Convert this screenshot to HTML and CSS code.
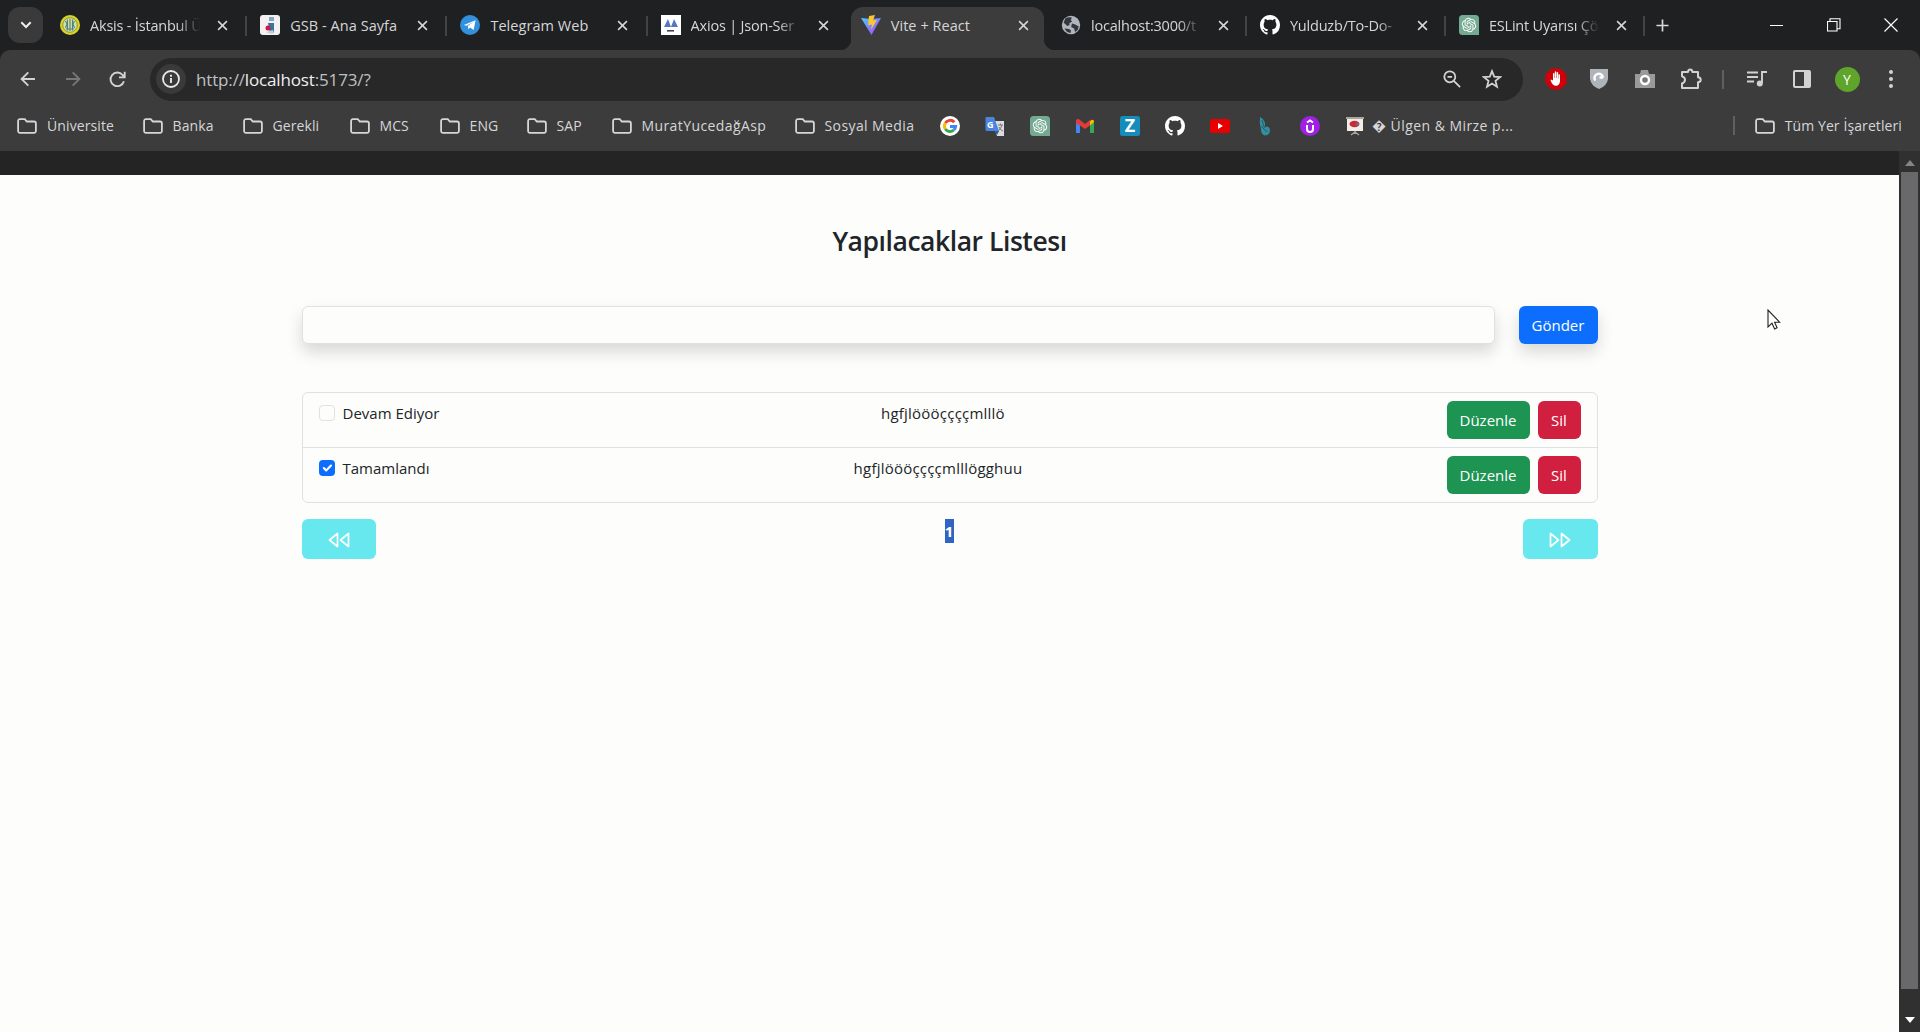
FILE: index.html
```html
<!DOCTYPE html>
<html lang="tr">
<head>
<meta charset="utf-8">
<title>Vite + React</title>
<link rel="stylesheet" href="styles.css">
</head>
<body>
<svg class="defs" aria-hidden="true">
  <symbol id="x" viewBox="0 0 12 12"><path d="M1.2 1.2l9.6 9.6M10.8 1.2l-9.6 9.6" stroke="currentColor" stroke-width="1.7" fill="none"/></symbol>
  <symbol id="folder" viewBox="0 0 20 16"><path d="M3 1.2h4.8l2 2.3H17A1.9 1.9 0 0 1 18.9 5.4v7.7A1.8 1.8 0 0 1 17 14.9H3a1.8 1.8 0 0 1-1.9-1.8V3A1.8 1.8 0 0 1 3 1.2z" stroke="currentColor" stroke-width="1.8" fill="none"/></symbol>
  <symbol id="github" viewBox="0 0 16 16"><path fill="#fff" d="M8 0C3.58 0 0 3.58 0 8c0 3.54 2.29 6.53 5.47 7.59.4.07.55-.17.55-.38 0-.19-.01-.82-.01-1.49-2.01.37-2.53-.49-2.69-.94-.09-.23-.48-.94-.82-1.13-.28-.15-.68-.52-.01-.53.63-.01 1.08.58 1.23.82.72 1.21 1.87.87 2.33.66.07-.52.28-.87.51-1.07-1.78-.2-3.64-.89-3.64-3.95 0-.87.31-1.59.82-2.15-.08-.2-.36-1.02.08-2.12 0 0 .67-.21 2.2.82.64-.18 1.32-.27 2-.27s1.36.09 2 .27c1.53-1.04 2.2-.82 2.2-.82.44 1.1.16 1.92.08 2.12.51.56.82 1.27.82 2.15 0 3.07-1.87 3.75-3.65 3.95.29.25.54.73.54 1.48 0 1.07-.01 1.93-.01 2.2 0 .21.15.46.55.38A8.01 8.01 0 0 0 16 8c0-4.42-3.58-8-8-8z"/></symbol>
  <symbol id="gpt" viewBox="0 0 40 40"><path d="M7 0h26a7 7 0 0 1 7 7v33H7a7 7 0 0 1-7-7V7a7 7 0 0 1 7-7z" fill="#74aa92"/><path transform="translate(5.6 5.6) scale(1.2)" fill="#fff" d="M22.2819 9.8211a5.9847 5.9847 0 0 0-.5157-4.9108 6.0462 6.0462 0 0 0-6.5098-2.9A6.0651 6.0651 0 0 0 4.9807 4.1818a5.9847 5.9847 0 0 0-3.9977 2.9 6.0462 6.0462 0 0 0 .7427 7.0966 5.98 5.98 0 0 0 .511 4.9107 6.051 6.051 0 0 0 6.5146 2.9001A5.9847 5.9847 0 0 0 13.2599 24a6.0557 6.0557 0 0 0 5.7718-4.2058 5.9894 5.9894 0 0 0 3.9977-2.9001 6.0557 6.0557 0 0 0-.7475-7.0729zm-9.022 12.6081a4.4755 4.4755 0 0 1-2.8764-1.0408l.1419-.0804 4.7783-2.7582a.7948.7948 0 0 0 .3927-.6813v-6.7369l2.02 1.1686a.071.071 0 0 1 .038.052v5.5826a4.504 4.504 0 0 1-4.4945 4.4944zm-9.6607-4.1254a4.4708 4.4708 0 0 1-.5346-3.0137l.142.0852 4.783 2.7582a.7712.7712 0 0 0 .7806 0l5.8428-3.3685v2.3324a.0804.0804 0 0 1-.0332.0615L9.74 19.9502a4.4992 4.4992 0 0 1-6.1408-1.6464zM2.3408 7.8956a4.485 4.485 0 0 1 2.3655-1.9728V11.6a.7664.7664 0 0 0 .3879.6765l5.8144 3.3543-2.0201 1.1685a.0757.0757 0 0 1-.071 0l-4.8303-2.7865A4.504 4.504 0 0 1 2.3408 7.872zm16.5963 3.8558L13.1038 8.364 15.1192 7.2a.0757.0757 0 0 1 .071 0l4.8303 2.7913a4.4944 4.4944 0 0 1-.6765 8.1042v-5.6772a.79.79 0 0 0-.407-.667zm2.0107-3.0231l-.142-.0852-4.7735-2.7818a.7759.7759 0 0 0-.7854 0L9.409 9.2297V6.8974a.0662.0662 0 0 1 .0284-.0615l4.8303-2.7866a4.4992 4.4992 0 0 1 6.6802 4.66zM8.3065 12.863l-2.02-1.1638a.0804.0804 0 0 1-.038-.0567V6.0742a4.4992 4.4992 0 0 1 7.3757-3.4537l-.142.0805L8.704 5.459a.7948.7948 0 0 0-.3927.6813zm1.0976-2.3654l2.602-1.4998 2.6069 1.4998v2.9994l-2.5974 1.4997-2.6067-1.4997Z"/></symbol>
</svg>

<header class="chrome">
  <div class="tabstrip">
    <button class="tabsearch"><svg width="12" height="8" viewBox="0 0 12 8"><path d="M1.3 1.3L6 6l4.700-4.700" stroke="#eee" stroke-width="2" fill="none"/></svg></button>
    <div class="tabs">
      <div class="tab">
        <svg class="fav" viewBox="0 0 20 20"><circle cx="10" cy="10" r="10" fill="#d8d42c"/><circle cx="10" cy="10" r="7.300" fill="#d7e0a8" stroke="#8f9a2a"/><path d="M10 4v12M7.500 4.500v11M12.500 4.500v11M5.500 6l1.500 3-1.500 4M14.500 6L13 9l1.500 4M6 14h8" stroke="#4b8580" stroke-width="1.100" fill="none"/></svg>
        <span class="name fade">Aksis - İstanbul Ü</span><svg class="close"><use href="#x"/></svg><i class="sep"></i>
      </div>
      <div class="tab">
        <svg class="fav" viewBox="0 0 20 20"><rect width="20" height="20" rx="3" fill="#f4f1f3"/><rect x="9" y="2" width="5" height="4" fill="#8ca6b8"/><path d="M8 8h6v10h-4z" fill="#37779d"/><path d="M6 17q5 3 8 1l-1-3z" fill="#c7ccd8"/><circle cx="8" cy="13" r="2.500" fill="#d51245"/></svg>
        <span class="name">GSB - Ana Sayfa</span><svg class="close"><use href="#x"/></svg><i class="sep"></i>
      </div>
      <div class="tab">
        <svg class="fav" viewBox="0 0 20 20"><circle cx="10" cy="10" r="10" fill="#3390dc"/><path d="M3.800 9.900L15.600 5.300 13.600 15l-3.500-2.500-1.700 1.700-.6-3.300 5.500-4-6.800 3.900z" fill="#fff"/></svg>
        <span class="name">Telegram Web</span><svg class="close"><use href="#x"/></svg><i class="sep"></i>
      </div>
      <div class="tab">
        <svg class="fav" viewBox="0 0 20 20"><rect width="20" height="20" fill="#fff"/><path d="M3 12l4-8 3 8zM10 12l3-8 4 8z" fill="#5974c4"/><path d="M6 15.800h7" stroke="#33384c" stroke-width="1.500"/></svg>
        <span class="name fade">Axios | Json-Ser</span><svg class="close"><use href="#x"/></svg>
      </div>
      <div class="tab active">
        <svg class="fav" viewBox="0 0 20 20"><defs><linearGradient id="v" x1="0" y1="0" x2="1" y2="1"><stop offset="0" stop-color="#41d1ff"/><stop offset="1" stop-color="#bd34fe"/></linearGradient></defs><path d="M0 3l10 1 10-1-9.500 17z" fill="url(#v)"/><path d="M8 1l6-1-2 5.500 4-.7L10 15l1-5.500-4 .8z" fill="#ffc62d"/></svg>
        <span class="name">Vite + React</span><svg class="close"><use href="#x"/></svg>
      </div>
      <div class="tab">
        <svg class="fav" viewBox="0 0 20 20"><circle cx="10" cy="10" r="9.200" fill="#adb6be"/><path d="M4.500 3.200Q7 1.800 11 2.400L9.700 5l1.500 1.400-2.700 1.500v2l-2.200 1L2.600 7.500zM11 8.500l3.200 1 3.500 2-1 3.500-2.600 2-1-3.500-3-1.500zM8 14l2 1.500-.5 2.500q-4-.3-6-4.500z" fill="#34363b"/></svg>
        <span class="name fade">localhost:3000/t</span><svg class="close"><use href="#x"/></svg><i class="sep"></i>
      </div>
      <div class="tab">
        <svg class="fav"><use href="#github"/></svg>
        <span class="name fade">Yulduzb/To-Do-</span><svg class="close"><use href="#x"/></svg><i class="sep"></i>
      </div>
      <div class="tab">
        <svg class="fav"><use href="#gpt"/></svg>
        <span class="name fade">ESLint Uyarısı Çö</span><svg class="close"><use href="#x"/></svg><i class="sep"></i>
      </div>
    </div>
    <svg class="newtab" viewBox="0 0 14 14"><path d="M7 .5v13M.5 7h13" stroke="#d8d8dc" stroke-width="1.800"/></svg>
    <div class="winctl">
      <svg width="14" height="14"><path d="M0 7.500h13" stroke="#fff"/></svg>
      <svg width="14" height="14"><path d="M.5 3.500h9.500v9.500H.5zM3 3.500V.7h10v10h-3" stroke="#fff" stroke-width="1.100" fill="none"/></svg>
      <svg width="14" height="14"><path d="M.5 .5l13 13M13.500 .5l-13 13" stroke="#fff" stroke-width="1.200"/></svg>
    </div>
  </div>

  <div class="toolbar">
    <div class="nav">
      <svg width="16" height="16" viewBox="0 0 16 16"><path d="M15 8H2M8.300 1.300L1.600 8l6.700 6.700" stroke="#d2d2d6" stroke-width="1.900" fill="none"/></svg>
      <svg width="16" height="16" viewBox="0 0 16 16"><path d="M1 8h13M7.700 1.300L14.400 8l-6.700 6.700" stroke="#77777b" stroke-width="1.900" fill="none"/></svg>
      <svg width="17" height="17" viewBox="0 0 17 17"><path d="M14.900 10.200A6.800 6.800 0 1 1 13.600 4L15.500 6M15.700 .8v5.600H10" stroke="#d2d2d6" stroke-width="1.900" fill="none"/></svg>
    </div>
    <div class="omnibox">
      <span class="info"><svg width="18" height="18" viewBox="0 0 18 18"><circle cx="9" cy="9" r="8" stroke="#e8e8ea" stroke-width="1.800" fill="none"/><path d="M9 8v5M9 4.800v1.900" stroke="#e8e8ea" stroke-width="1.900"/></svg></span>
      <span class="url">http://<b>localhost</b>:5173/?</span>
      <svg class="zoom" width="18" height="18" viewBox="0 0 18 18"><circle cx="6.800" cy="6.800" r="5.500" stroke="#d2d2d0" stroke-width="1.800" fill="none"/><path d="M4.500 6.800h4.600M10.800 10.800l6.300 6.300" stroke="#d2d2d0" stroke-width="1.800"/></svg>
      <svg width="20" height="20" viewBox="0 0 20 20"><path d="M10 2.200l2.200 5.500 5.900.4-4.600 3.800 1.500 5.800-5-3.200-5 3.200 1.500-5.800-4.600-3.800 5.900-.4z" stroke="#d2d2d0" stroke-width="1.800" fill="none"/></svg>
    </div>
    <div class="ext">
      <svg width="22" height="22" viewBox="0 0 22 22"><path d="M6.500 .5h9l6 6v9l-6 6h-9l-6-6v-9z" fill="#cf0008"/><path d="M6 11.500l2 1V5.500q.8-1.200 1.400 0V10h.4V3.800q.8-1.200 1.500 0V10h.4V4.500q.8-1.100 1.500 0v6h.3V6.800q.9-1 1.500 0v6.700q-.5 4-4 4.300-3.500 0-5.500-5.500z" fill="#fff"/></svg>
      <svg width="18" height="20" viewBox="0 0 18 20"><path d="M0 0h18v10q-1 7-9 10-8-3-9-10z" fill="#aeb4ba"/><path d="M5.300 11.600A4.300 4.300 0 1 1 13 8.500M13.200 8.500h-3.700" stroke="#fff" stroke-width="2.400" fill="none"/></svg>
      <svg width="20" height="18" viewBox="0 0 20 18"><path d="M0 4h5l1-4h7l1 4h6v14H0z" fill="#9a9a9c"/><circle cx="10" cy="10" r="4" stroke="#fff" stroke-width="2.400" fill="#777"/></svg>
      <svg width="22" height="22" viewBox="0 0 22 22"><path d="M2 4h6q0-2.600 2.200-2.600T12.400 4H18v5.200q2.700.2 2.700 2.600T18 14.300V20H2v-4.500q3-1 3-3.700T2 8.200z" stroke="#d2d2d2" stroke-width="2" stroke-linejoin="round" fill="none"/></svg>
      <i class="bar"></i>
      <svg width="20" height="18" viewBox="0 0 20 18"><path d="M0 2.500h11M0 7h11M0 11.500h7M15 13V2h5" stroke="#d2d2d2" stroke-width="1.900" fill="none"/><circle cx="12.800" cy="13.500" r="3" fill="#d2d2d2"/></svg>
      <svg width="18" height="18" viewBox="0 0 18 18"><rect x="1" y="1" width="16" height="16" rx="1" stroke="#d2d2d2" stroke-width="2" fill="none"/><path d="M11 1h6v16h-6z" fill="#d2d2d2"/></svg>
      <span class="avatar">Y</span>
      <svg width="4" height="18" viewBox="0 0 4 18"><circle cx="2" cy="2" r="2" fill="#d2d2d2"/><circle cx="2" cy="9" r="2" fill="#d2d2d2"/><circle cx="2" cy="16" r="2" fill="#d2d2d2"/></svg>
    </div>
  </div>

  <nav class="bookmarks">
    <a class="w1"><svg class="fld"><use href="#folder"/></svg>Üniversite</a>
    <a class="w2"><svg class="fld"><use href="#folder"/></svg>Banka</a>
    <a class="w3"><svg class="fld"><use href="#folder"/></svg>Gerekli</a>
    <a class="w4"><svg class="fld"><use href="#folder"/></svg>MCS</a>
    <a class="w5"><svg class="fld"><use href="#folder"/></svg>ENG</a>
    <a class="w6"><svg class="fld"><use href="#folder"/></svg>SAP</a>
    <a class="w7"><svg class="fld"><use href="#folder"/></svg>MuratYucedağAsp</a>
    <a class="w8"><svg class="fld"><use href="#folder"/></svg>Sosyal Media</a>
    <span class="sites">
      <svg viewBox="0 0 20 20"><circle cx="10" cy="10" r="10" fill="#fff"/><g fill="none" stroke-width="3"><path d="M14.300 6.300A5.600 5.600 0 0 0 5.300 7" stroke="#ea4335"/><path d="M5.300 7a5.600 5.600 0 0 0 0 6" stroke="#fbbc05"/><path d="M5.300 13a5.600 5.600 0 0 0 8.500 1" stroke="#34a853"/><path d="M13.800 14a5.500 5.500 0 0 0 1.800-3.500H10" stroke="#4285f4"/></g></svg>
      <svg viewBox="0 0 20 20"><path d="M7 5h12v15h-7z" fill="#dcdce0"/><path d="M1 1h8l5 14H2q-1.500 0-1.500-1.500V2z" fill="#4a86e0"/><path d="M10 15h4l-2 4z" fill="#2855b0"/><path d="M13 9h5M15.500 7.500V9M17 9q-1 4-4 6M14 11q1 3 4 4" stroke="#777" fill="none"/><text x="2" y="11.500" font-size="9" font-weight="bold" fill="#fff">G</text></svg>
      <svg><use href="#gpt"/></svg>
      <svg viewBox="0 0 20 20"><path d="M1 5l4 3v9H1z" fill="#4285f4"/><path d="M15 8l4-3v12h-4z" fill="#34a853"/><path d="M15 5q4-3 4 1l-4 3.500z" fill="#fbbc04"/><path d="M1 4q2-2 4 0l5 4 5-4v5.500L10 13 5 9.500 1 7z" fill="#e33b36"/></svg>
      <svg viewBox="0 0 20 20"><rect width="20" height="20" rx="2.500" fill="#168cba"/><text x="10" y="16.200" font-size="18" font-weight="bold" text-anchor="middle" fill="#fff">Z</text></svg>
      <svg><use href="#github"/></svg>
      <svg viewBox="0 0 20 20"><rect y="3" width="20" height="14" rx="2.500" fill="#e80000"/><path d="M8 7l5 3-5 3z" fill="#fff"/></svg>
      <svg viewBox="0 0 20 20"><path d="M5 1q4 2 5 6v4q4-1.500 5 2.500.3 5.500-5 6-4-1-4-6-2-6-1-12.500z" fill="#358e9f"/><path d="M7 4l2.500 8M6 10l4 4M10 15h2.500" stroke="#245d69" fill="none"/></svg>
      <svg viewBox="0 0 20 20"><circle cx="10" cy="10" r="10" fill="#a020e8"/><path d="M7 9v4q0 3 3 3t3-3V9M7 6.500l3-2 3 2" stroke="#fff" stroke-width="2" fill="none"/></svg>
    </span>
    <a class="deck"><svg width="20" height="20" viewBox="0 0 20 20"><path d="M1 1h18v2H1z" fill="#aaa69c"/><path d="M2 3h16v12H2z" fill="#f1eee9"/><ellipse cx="9.500" cy="8" rx="5" ry="3.200" fill="#c92b31"/><path d="M9 8l5-1v3z" fill="#5477a4"/><path d="M10 15v3M10 16l-4 3M10 16l4 3" stroke="#aaa69c" stroke-width="1.300"/></svg>� Ülgen &amp; Mirze p...</a>
    <i class="bar"></i>
    <a class="all"><svg class="fld"><use href="#folder"/></svg>Tüm Yer İşaretleri</a>
  </nav>
</header>

<div class="viewport">
  <main class="page">
    <div class="band"></div>
    <section class="todo">
      <h1>Yapılacaklar Listesı</h1>
      <form class="entry"><input type="text"><button type="button" class="btn primary">Gönder</button></form>
      <ul class="list">
        <li><label><span class="box"></span>Devam Ediyor</label><span class="task">hgfjlöööççççmlllö</span><span class="acts"><button class="btn success">Düzenle</button><button class="btn danger">Sil</button></span></li>
        <li><label><span class="box on"><svg width="16" height="16" viewBox="0 0 20 20"><path d="M6 10l3 3 6-6" fill="none" stroke="#fff" stroke-width="2.600" stroke-linecap="round" stroke-linejoin="round"/></svg></span>Tamamlandı</label><span class="task">hgfjlöööççççmlllögghuu</span><span class="acts"><button class="btn success">Düzenle</button><button class="btn danger">Sil</button></span></li>
      </ul>
      <div class="pager">
        <button class="page-btn prev"><svg width="22" height="16" viewBox="0 0 22 16"><path d="M9.500 1.500v13L1.500 8zM20.500 1.500v13L12.500 8z" fill="none" stroke="#fff" stroke-width="1.700" stroke-linejoin="round"/></svg></button>
        <b class="current">1</b>
        <button class="page-btn next"><svg width="22" height="16" viewBox="0 0 22 16"><path d="M1.500 1.500v13l8-6.500zM12.500 1.500v13l8-6.500z" fill="none" stroke="#fff" stroke-width="1.700" stroke-linejoin="round"/></svg></button>
      </div>
    </section>
  </main>
  <aside class="scroll">
    <svg class="up" width="10" height="6" viewBox="0 0 10 6"><path d="M0 6l5-6 5 6z" fill="#858588"/></svg>
    <div class="thumb"></div>
    <svg class="down" width="10" height="6" viewBox="0 0 10 6"><path d="M0 0h10L5 6z" fill="#fff"/></svg>
  </aside>
</div>
<svg class="cursor" width="14" height="22" viewBox="0 0 14 22"><path d="M1 1v17l4-3.800 2.600 5.800 2.500-1.200L7.600 13.200h5z" fill="#fff" stroke="#222" stroke-width="1.100"/></svg>
</body>
</html>
```
FILE: styles.css
```css
* { box-sizing: border-box; }
body { margin: 0; height: 1032px; overflow: hidden; display: flex; flex-direction: column; font-family: "Open Sans", "Noto Sans", sans-serif; background: #fdfdfb; }
button { font: inherit; border: 0; padding: 0; }
svg { display: block; flex: none; }
.defs { position: absolute; width: 0; height: 0; }

.chrome { background: #1f2021; height: 151px; flex: none; color: #d6d6d8; }
.tabstrip { height: 50px; display: flex; align-items: center; }
.tabsearch { width: 35px; height: 36px; margin-left: 8px; border-radius: 12px; background: #393a39; display: flex; align-items: center; justify-content: center; }
.tabs { display: flex; align-self: stretch; margin-left: 7px; }
.tab { width: 200.200px; padding: 0 19px 0 10px; display: flex; align-items: center; position: relative; font-size: 14.500px; font-weight: 500; }
.tab:nth-child(n+6) { width: 199px; }
.fav { width: 20px; height: 20px; }
.name { width: 115px; margin-left: 10px; white-space: nowrap; letter-spacing: .05px; }
.fade { letter-spacing: -.2px; -webkit-mask-image: linear-gradient(90deg, #000 76%, transparent 96%); mask-image: linear-gradient(90deg, #000 76%, transparent 96%); }
.close { width: 11px; height: 11px; margin-left: 12px; color: #d6d6d8; }
.sep { position: absolute; right: 3px; top: 16px; width: 2px; height: 20px; background: #424344; }
.tab.active::before { content: ""; position: absolute; z-index: 0; left: 0; right: 7px; top: 7px; bottom: 0; background: #3c3c3c; border-radius: 12px 12px 0 0; }
.tab.active::after { content: ""; position: absolute; left: -11px; right: -4px; bottom: 0; height: 11px; background: radial-gradient(circle at 0 0, transparent 11px, #3c3c3c 11.500px) left / 11px 11px no-repeat, radial-gradient(circle at 100% 0, transparent 11px, #3c3c3c 11.500px) right / 11px 11px no-repeat; }
.tab.active > * { position: relative; z-index: 1; }
.newtab { width: 13px; height: 13px; margin-left: 8px; }
.winctl { margin-left: auto; display: flex; gap: 43px; padding-right: 22px; }

.toolbar { height: 58px; background: #3c3c3c; border-radius: 10px 10px 0 0; display: flex; align-items: center; }
.nav { display: flex; gap: 29px; padding-left: 20px; width: 150px; align-items: center; }
.nav svg:last-child { margin-left: -1px; }
.omnibox { width: 1373px; height: 43px; border-radius: 22px; background: #282828; display: flex; align-items: center; padding: 0 21px 0 6px; }
.info { width: 30px; height: 30px; border-radius: 50%; background: #3a3a3a; display: flex; align-items: center; justify-content: center; }
.url { margin-left: 10px; font-size: 17px; color: #bfc0c2; flex: 1; letter-spacing: -.15px; }
.url b { font-weight: 400; color: #f0f0f2; }
.zoom { margin-right: 21px; }
.ext { display: grid; grid-template-columns: 43px 44px 48px 44px 20px 48px 42px 48px 40px; margin-left: 11px; justify-items: center; align-items: center; }
.bar { width: 2px; height: 19px; background: #606062; }
.avatar { width: 25px; height: 25px; border-radius: 50%; background: #5fa52c; color: #fff; font-size: 14px; line-height: 25px; text-align: center; }

.bookmarks { height: 43px; background: #3c3c3c; display: flex; align-items: center; padding: 0 18px 8px 17px; font-size: 14px; font-weight: 500; white-space: nowrap; letter-spacing: .1px; }
.bookmarks a { display: flex; align-items: center; }
.fld { width: 20px; height: 16px; margin-right: 10px; }
.w1 { width: 125.500px; } .w2 { width: 100px; } .w3 { width: 107px; } .w4 { width: 90px; }
.w5 { width: 87px; } .w6 { width: 85px; } .w7 { width: 183px; letter-spacing: .4px; } .w8 { width: 145.500px; letter-spacing: .4px; }
.sites { display: flex; gap: 25px; }
.sites svg { width: 20px; height: 20px; }
.deck { margin-left: 25px; letter-spacing: .45px; }
.deck svg { margin-right: 7px; }
.bookmarks .bar { margin-left: auto; margin-right: 20px; }

.viewport { flex: 1; display: flex; min-height: 0; }
.page { flex: 1; color: #212529; font-size: 15px; }
.band { height: 24px; background: #242424; }
.todo { width: 1296px; margin: 0 auto; padding-top: 49px; }
h1 { margin: 0; text-align: center; font-size: 26.500px; font-weight: 600; line-height: 34px; letter-spacing: -.45px; }
.entry { margin-top: 47.500px; display: flex; gap: 24px; }
.entry input { flex: 1; height: 38px; border: 1px solid #dee2e6; border-radius: 6px; background: #fdfdfb; box-shadow: 0 8px 16px rgba(0,0,0,.15); outline: 0; }
.btn { height: 38px; border-radius: 6px; color: #fff; text-align: center; }
.primary { width: 79px; background: #0d6efd; box-shadow: 0 8px 16px rgba(0,0,0,.15); }
.list { list-style: none; margin: 48.500px 0 0; padding: 0; border: 1px solid #dee2e6; border-radius: 6px; }
.list li { height: 54px; padding: 8px 16px; display: flex; justify-content: space-between; }
.list li + li { height: 55px; border-top: 1px solid #dee2e6; }
label { display: flex; align-items: flex-start; line-height: 24px; }
.box { width: 16px; height: 16px; border: 1px solid #dee2e6; border-radius: 4px; margin: 4px 8px 0 0; }
.box.on { border: 0; background: #0d6efd; }
.task { line-height: 24px; letter-spacing: .22px; }
.acts { display: flex; gap: 8px; }
.success { width: 83px; background: #1d9452; }
.danger { width: 43px; background: #d1203f; }
.pager { margin-top: 16px; display: flex; justify-content: space-between; align-items: flex-start; }
.page-btn { height: 40px; width: 74px; border-radius: 6px; background: #67e8ef; display: flex; align-items: center; justify-content: center; }
.page-btn svg { margin-top: 1px; }
.page-btn.next { width: 75px; }
.current { background: #3163c2; color: #fff; line-height: 24px; width: 9px; text-align: center; }

.scroll { width: 21px; background: #303030; display: flex; flex-direction: column; align-items: center; }
.up { margin: 9px 0 6px; }
.thumb { width: 17px; height: 817px; background: #69696b; }
.down { margin-top: 28px; }
.cursor { position: absolute; left: 1767px; top: 309px; }
```
